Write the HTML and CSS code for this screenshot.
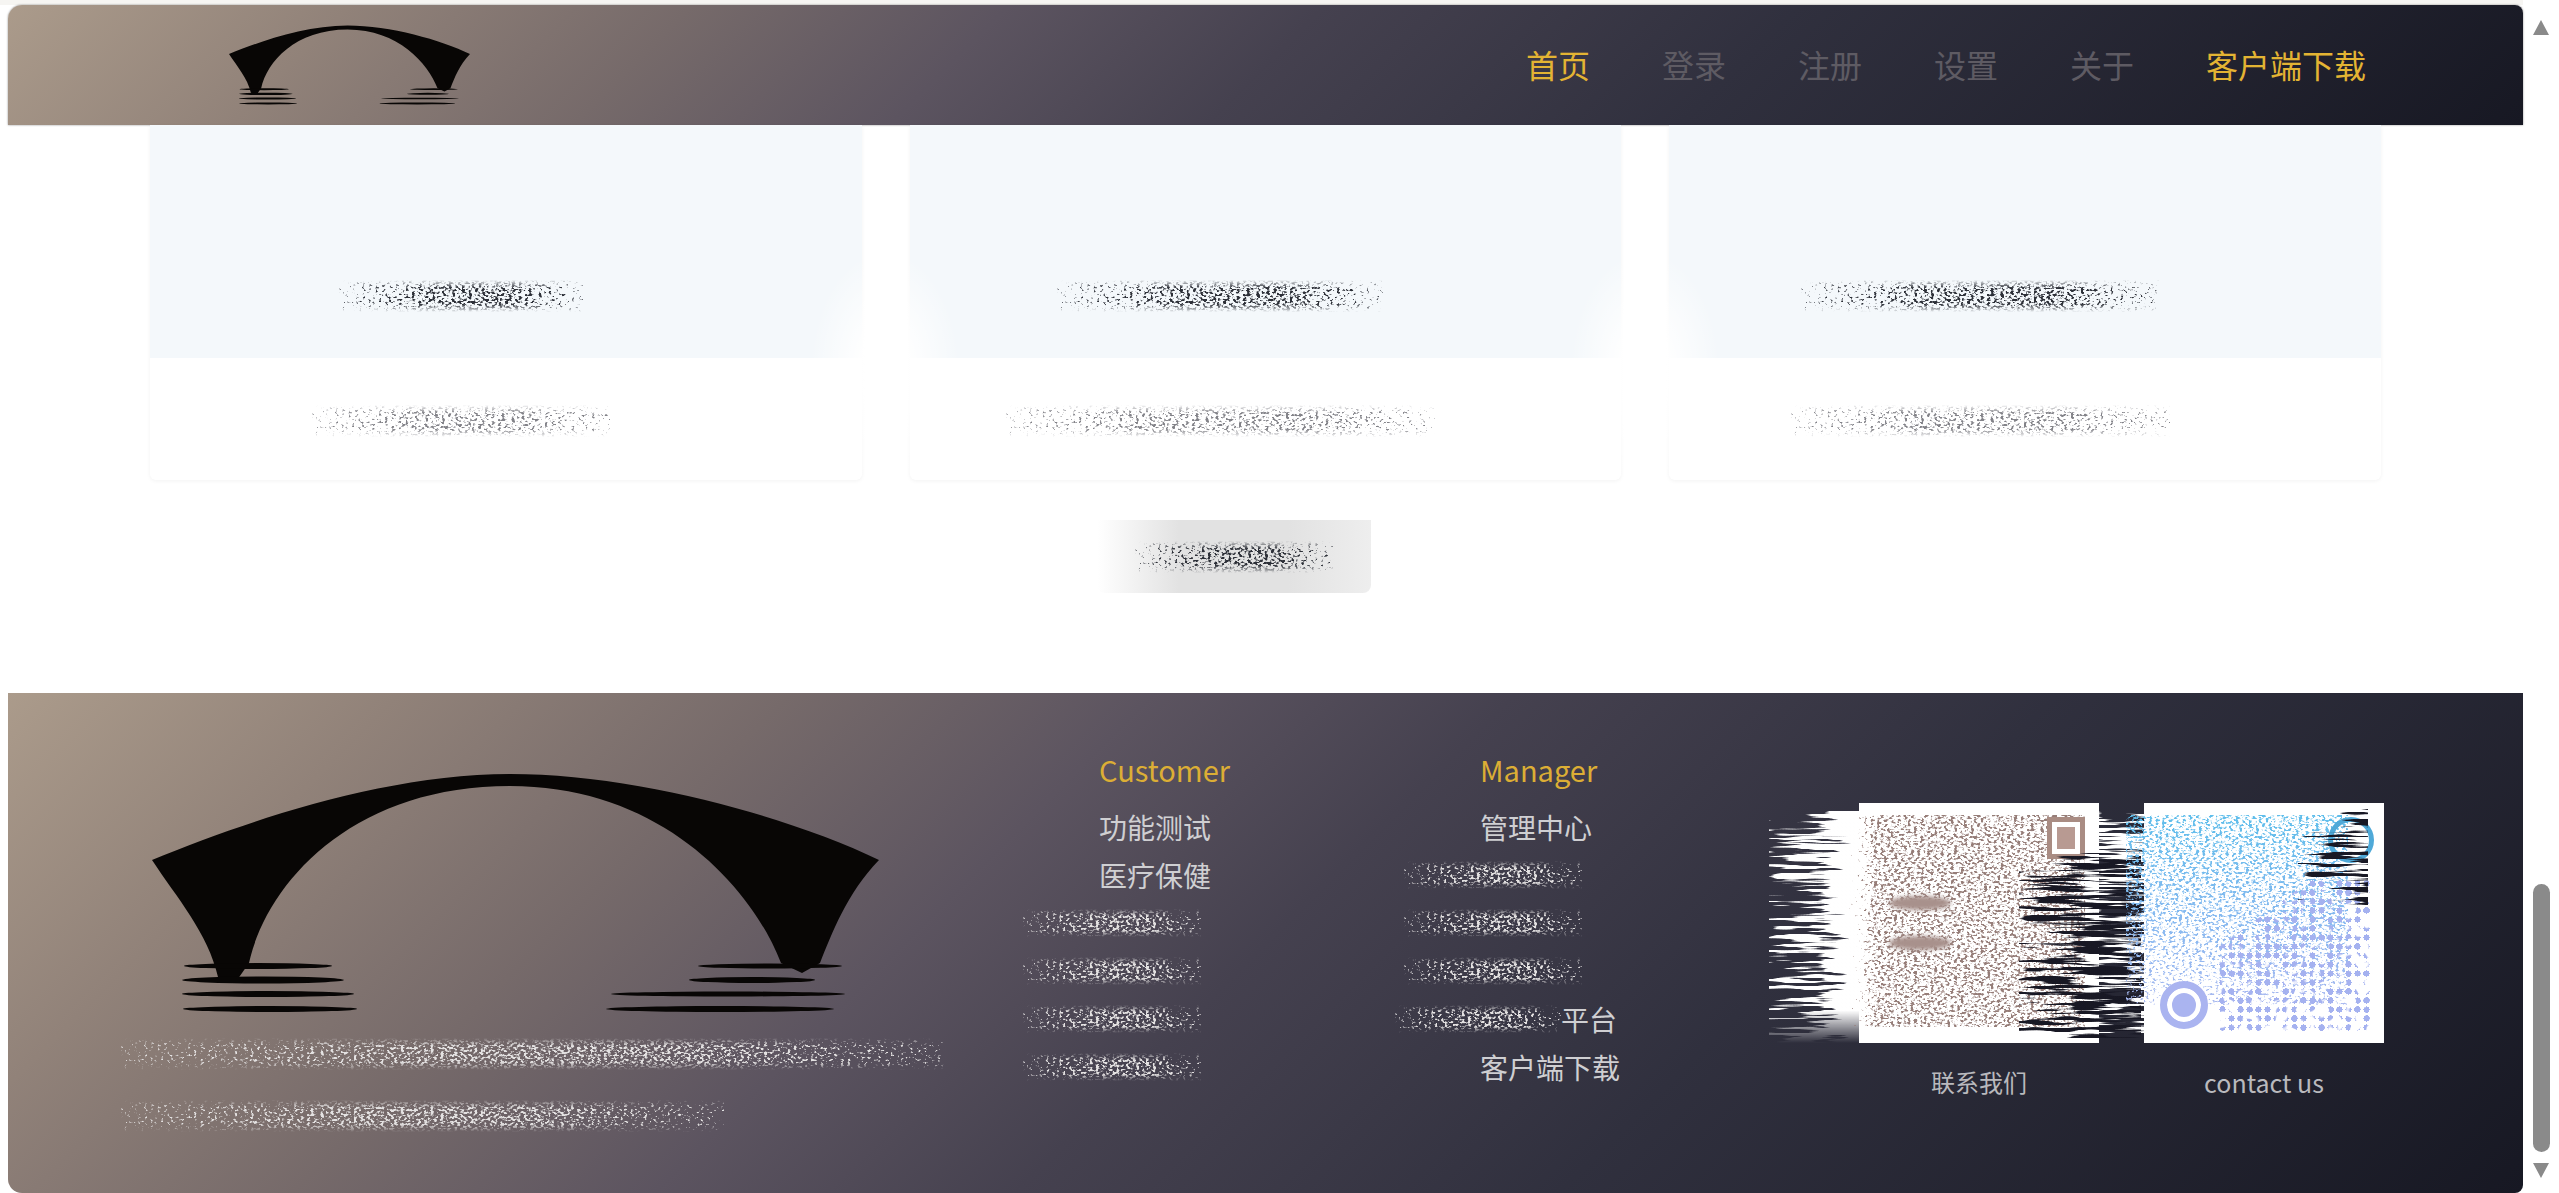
FILE: index.html
```html
<!DOCTYPE html>
<html lang="zh-CN">
	<head>
		<meta charset="UTF-8" />
		<meta name="viewport" content="width=device-width, initial-scale=1.0" />
		<title>首页</title>
		<link rel="stylesheet" href="styles.css">
	</head>
	<body>

		<!-- shared logo and the noise filters for the unreadable areas -->
		<svg class="defs" width="0" height="0" aria-hidden="true">
			<symbol id="bridge" viewBox="0 0 727 240">
				<path d="M0 87 C90 50 230 1 358 1 C486 1 640 45 727 87 C695 120 680 160 668 190 L650 200 L629 190 C600 115 510 13 358 13 C200 13 115 110 97 190 L83 210 L66 204 C56 160 25 125 0 87 Z" />
				<ellipse cx="106" cy="193" rx="74" ry="3" />
				<ellipse cx="111" cy="207" rx="81" ry="3.5" />
				<ellipse cx="116" cy="221" rx="86" ry="3" />
				<ellipse cx="118" cy="236" rx="87" ry="3" />
				<ellipse cx="618" cy="193" rx="72" ry="2.5" />
				<ellipse cx="600" cy="207" rx="63" ry="3" />
				<ellipse cx="576" cy="221" rx="117" ry="2.5" />
				<ellipse cx="568" cy="236" rx="114" ry="3" />
			</symbol>
			<filter id="speckle" x="0" y="0" width="100%" height="100%" color-interpolation-filters="sRGB">
				<feTurbulence type="fractalNoise" baseFrequency=".3 .42" numOctaves="2" seed="4" />
				<feColorMatrix values="0 0 0 0 0 0 0 0 0 0 0 0 0 0 0 0 0 0 1 0" result="noise" />
				<feComposite in="noise" in2="SourceAlpha" operator="arithmetic" k2="1" k3="1" k4="-1" />
				<feColorMatrix values="0 0 0 0 0 0 0 0 0 0 0 0 0 0 0 0 0 0 7 0" result="holes" />
				<feColorMatrix in="SourceGraphic" values="1 0 0 0 0 0 1 0 0 0 0 0 1 0 0 0 0 0 0 1" />
				<feComposite in2="holes" operator="in" />
			</filter>
			<filter id="streak" x="0" y="0" width="100%" height="100%" color-interpolation-filters="sRGB">
				<feTurbulence type="fractalNoise" baseFrequency=".018 .28" numOctaves="2" seed="9" />
				<feColorMatrix values="0 0 0 0 0 0 0 0 0 0 0 0 0 0 0 0 0 0 1 0" result="noise" />
				<feComposite in="noise" in2="SourceAlpha" operator="arithmetic" k2="1" k3="1" k4="-1" />
				<feColorMatrix values="0 0 0 0 0 0 0 0 0 0 0 0 0 0 0 0 0 0 14 0" result="holes" />
				<feColorMatrix in="SourceGraphic" values="1 0 0 0 0 0 1 0 0 0 0 0 1 0 0 0 0 0 0 1" />
				<feComposite in2="holes" operator="in" />
			</filter>
			<filter id="patchy" x="0" y="0" width="100%" height="100%" color-interpolation-filters="sRGB">
				<feTurbulence type="fractalNoise" baseFrequency=".11" numOctaves="1" seed="3" />
				<feColorMatrix values="0 0 0 0 0 0 0 0 0 0 0 0 0 0 0 0 0 0 1 0" result="noise" />
				<feComposite in="noise" in2="SourceAlpha" operator="arithmetic" k2="1" k3="1" k4="-1" />
				<feColorMatrix values="0 0 0 0 0 0 0 0 0 0 0 0 0 0 0 0 0 0 14 0" result="holes" />
				<feColorMatrix in="SourceGraphic" values="1 0 0 0 0 0 1 0 0 0 0 0 1 0 0 0 0 0 0 1" />
				<feComposite in2="holes" operator="in" />
			</filter>
		</svg>

		<div class="page">
			<header class="topbar">
				<svg class="logo-small" aria-hidden="true"><use href="#bridge" /></svg>
				<nav class="nav">
					<a class="nav-link gold">首页</a>
					<a class="nav-link">登录</a>
					<a class="nav-link">注册</a>
					<a class="nav-link">设置</a>
					<a class="nav-link">关于</a>
					<a class="nav-link gold">客户端下载</a>
				</nav>
			</header>

			<main class="content">
				<div class="cards">
					<article class="card">
						<div class="card-top"><span class="smudge dark shifted w-244"></span></div>
						<div class="card-bottom"><span class="smudge grey shifted w-298"></span></div>
					</article>
					<article class="card">
						<div class="card-top"><span class="smudge dark shifted w-326"></span></div>
						<div class="card-bottom"><span class="smudge grey shifted w-429"></span></div>
					</article>
					<article class="card">
						<div class="card-top"><span class="smudge dark shifted w-359"></span></div>
						<div class="card-bottom"><span class="smudge grey shifted w-379"></span></div>
					</article>
					<div class="seam first"></div>
					<div class="seam second"></div>
				</div>
				<div class="more-row">
					<div class="more-btn"><span class="smudge dark w-198"></span></div>
				</div>
			</main>

			<footer class="footer">
				<div class="brand">
					<svg class="logo-large" aria-hidden="true"><use href="#bridge" /></svg>
					<span class="smudge light line-long"></span>
					<span class="smudge light line-short"></span>
				</div>

				<div class="links">
					<h3 class="links-title">Customer</h3>
					<a class="link">功能测试</a>
					<a class="link">医疗保健</a>
					<span class="smudge light row-smudge"></span>
					<span class="smudge light row-smudge"></span>
					<span class="smudge light row-smudge"></span>
					<span class="smudge light row-smudge"></span>
				</div>

				<div class="links">
					<h3 class="links-title">Manager</h3>
					<a class="link">管理中心</a>
					<span class="smudge light row-smudge"></span>
					<span class="smudge light row-smudge"></span>
					<span class="smudge light row-smudge"></span>
					<div class="link-mixed">
						<span class="smudge light mixed-smudge"></span>
						<a class="link">平台</a>
					</div>
					<a class="link">客户端下载</a>
				</div>

				<div class="codes">
					<figure class="code">
						<div class="qr">
							<div class="qr-smear-left"></div>
							<div class="qr-noise brown"></div>
							<div class="qr-blob first"></div>
							<div class="qr-blob second"></div>
							<div class="qr-finder"></div>
							<div class="qr-smear-gap"></div>
							<div class="qr-smear-dark"></div>
						</div>
						<figcaption class="code-label">联系我们</figcaption>
					</figure>
					<figure class="code">
						<div class="qr">
							<div class="qr-noise blue"></div>
							<div class="qr-dots"></div>
							<div class="qr-target"></div>
							<div class="qr-arc"></div>
							<div class="qr-smear-corner"></div>
						</div>
						<figcaption class="code-label">contact us</figcaption>
					</figure>
				</div>
			</footer>
		</div>

		<div class="scrollbar" aria-hidden="true">
			<div class="arrow-up"></div>
			<div class="thumb"></div>
			<div class="arrow-down"></div>
		</div>

	</body>
</html>
```

FILE: styles.css
```css
* {
	box-sizing: border-box;
	margin: 0;
	padding: 0;
}

html,
body {
	height: 100%;
	overflow: hidden;
}

body {
	background: #fff;
	display: flex;
	font-family: "Noto Sans CJK SC", "Open Sans", sans-serif;
}

.defs {
	position: absolute;
}

.page {
	width: 2523px;
	padding: 5px 0 0 8px;
	background: linear-gradient(to bottom, #f6f5f2 5px, #fff 5px);
}

/* top bar */
.topbar,
.footer {
	background: linear-gradient(135deg, #ab9b8b 0%, #918279 13%, #766a6a 26%, #5c5460 38%, #45414f 50%, #30303e 68%, #171823 100%);
}

.topbar {
	height: 120px;
	display: flex;
	align-items: center;
	justify-content: space-between;
	padding: 0 157px 0 221px;
	border-top-left-radius: 14px;
	border-top-right-radius: 8px;
	box-shadow: 0 0 2px rgba(0, 0, 0, 0.5);
	position: relative;
}

.logo-small {
	width: 241px;
	height: 80px;
	fill: #080605;
	filter: blur(0.5px);
}

.nav {
	display: flex;
	gap: 72px;
	margin-bottom: 2px;
}

.nav-link {
	font-size: 32px;
	line-height: 48px;
	color: #5e5b63;
}

.nav-link.gold {
	color: #e3b433;
}

/* cards */
.content {
	height: 568px;
	padding: 0 142px;
}

.cards {
	display: grid;
	grid-template-columns: repeat(3, 1fr);
	gap: 48px;
	position: relative;
}

.card {
	height: 355px;
	display: flex;
	flex-direction: column;
	background: #fff;
	border-radius: 0 0 6px 6px;
	box-shadow: 0 1px 4px rgba(0, 0, 0, 0.05);
}

.card-top {
	height: 233px;
	padding-top: 155px;
	background: #f4f8fb;
	text-align: center;
}

.card-bottom {
	flex: 1;
	padding-top: 47px;
	text-align: center;
}

/* the card edges wash out here */
.seam {
	position: absolute;
	top: 125px;
	width: 150px;
	height: 240px;
	background: radial-gradient(closest-side, rgba(255, 255, 255, 0.9) 35%, rgba(255, 255, 255, 0));
}

.seam.first {
	left: 660px;
}

.seam.second {
	left: 1420px;
}

.more-row {
	display: flex;
	justify-content: center;
	padding-right: 64px;
	margin-top: 40px;
}

.more-btn {
	width: 274px;
	height: 73px;
	display: flex;
	align-items: center;
	justify-content: center;
	background: linear-gradient(to right, #fff 0%, #e2e2e2 30%, #e2e2e2 70%, #eee 100%);
	border-radius: 0 0 8px 8px;
}

/* stand-ins for the areas where the text can't be read */
.smudge {
	display: inline-block;
	height: 32px;
	filter: url(#speckle);
	-webkit-mask-image: linear-gradient(to bottom, transparent, #000 25%, #000 75%, transparent);
	mask-image: linear-gradient(to bottom, transparent, #000 25%, #000 75%, transparent);
}

.smudge.shifted {
	margin-right: 90px;
}

.smudge.dark {
	background: linear-gradient(to right, rgba(45, 48, 56, 0.33), rgba(45, 48, 56, 0.5) 35%, rgba(45, 48, 56, 0.53) 70%, rgba(45, 48, 56, 0.33));
}

.smudge.grey {
	background: linear-gradient(to right, rgba(130, 130, 136, 0.34), rgba(130, 130, 136, 0.48) 35%, rgba(130, 130, 136, 0.48) 70%, rgba(130, 130, 136, 0.34));
}

.smudge.light {
	background: linear-gradient(to right, rgba(228, 226, 226, 0.36), rgba(228, 226, 226, 0.52) 40%, rgba(228, 226, 226, 0.52) 70%, rgba(228, 226, 226, 0.36));
}

.w-198 { width: 198px; }
.w-244 { width: 244px; }
.w-298 { width: 298px; }
.w-326 { width: 326px; }
.w-359 { width: 359px; }
.w-379 { width: 379px; }
.w-429 { width: 429px; }

/* footer */
.footer {
	height: 500px;
	display: grid;
	grid-template-columns: 978px 381px 379px auto;
	padding-left: 113px;
	border-bottom-left-radius: 14px;
	border-bottom-right-radius: 8px;
}

.brand {
	display: flex;
	flex-direction: column;
	align-items: flex-start;
	padding-top: 80px;
}

.logo-large {
	width: 727px;
	height: 240px;
	margin-left: 31px;
	fill: #080605;
	filter: blur(0.6px);
}

.line-long {
	width: 823px;
	margin-top: 25px;
}

.line-short {
	width: 603px;
	margin-top: 30px;
}

.links {
	display: flex;
	flex-direction: column;
	align-items: flex-start;
	padding-top: 52px;
}

.links-title {
	font-size: 29px;
	font-weight: 400;
	line-height: 48px;
	margin-bottom: 10px;
	color: #dcae35;
}

.link {
	font-size: 28px;
	line-height: 48px;
	color: #cfcfd2;
}

.row-smudge {
	width: 178px;
	height: 28px;
	margin: 10px 0 10px -76px;
}

.link-mixed {
	display: flex;
	align-items: center;
	margin-left: -85px;
}

.mixed-smudge {
	width: 166px;
	height: 28px;
}

.codes {
	display: flex;
	gap: 45px;
	padding-top: 110px;
}

.code-label {
	font-size: 24px;
	line-height: 36px;
	margin-top: 21px;
	text-align: center;
	color: #b9b9bd;
}

.code:last-child .code-label {
	font-size: 25px;
}

.qr {
	width: 240px;
	height: 240px;
	background: #fff;
	position: relative;
}

/* everything in a code sits on top of the white square */
.qr-noise {
	position: absolute;
	top: 12px;
	filter: url(#speckle);
}

.qr-noise.brown {
	left: -18px;
	width: 244px;
	height: 212px;
	background: linear-gradient(to right, rgba(150, 125, 120, 0.1), rgba(150, 125, 120, 0.5) 14%);
}

.qr-noise.blue {
	left: -18px;
	width: 222px;
	height: 190px;
	background: linear-gradient(to bottom, rgba(95, 190, 235, 0.5), rgba(135, 185, 240, 0.5) 55%, rgba(170, 185, 240, 0.42));
}

.qr-blob {
	position: absolute;
	left: 30px;
	width: 62px;
	height: 14px;
	border-radius: 50%;
	background: #a8918c;
	filter: blur(2px);
}

.qr-blob.first {
	top: 93px;
}

.qr-blob.second {
	top: 133px;
}

.qr-finder {
	position: absolute;
	top: 14px;
	right: 14px;
	width: 38px;
	height: 42px;
	border: 5px solid #a98c83;
	box-shadow: inset 0 0 0 5px #fff, inset 0 0 0 14px #b89a92;
}

.qr-smear-left {
	position: absolute;
	top: 8px;
	left: -90px;
	width: 120px;
	height: 232px;
	background: linear-gradient(to right, rgba(255, 255, 255, 0.42), rgba(255, 255, 255, 0.56) 45%, rgba(255, 255, 255, 0.95) 75%);
	filter: url(#streak);
	-webkit-mask-image: linear-gradient(to bottom, #000 86%, transparent);
	mask-image: linear-gradient(to bottom, #000 86%, transparent);
}

.qr-smear-gap {
	position: absolute;
	top: 8px;
	left: 240px;
	width: 45px;
	height: 222px;
	background: rgba(255, 255, 255, 0.56);
	filter: url(#streak);
}

.qr-smear-dark {
	position: absolute;
	top: 50px;
	left: 160px;
	width: 122px;
	height: 185px;
	background: linear-gradient(to right, rgba(24, 24, 36, 0.42), rgba(24, 24, 36, 0.56) 50%, rgba(24, 24, 36, 0.5));
	filter: url(#streak);
}

.qr-dots {
	position: absolute;
	left: 74px;
	top: 76px;
	width: 152px;
	height: 152px;
	background: radial-gradient(circle, rgba(165, 178, 240, 0.58) 3px, transparent 3.5px) 0 0 / 9px 9px;
	clip-path: polygon(62% 0, 100% 0, 100% 100%, 0 100%, 0 45%);
	filter: url(#patchy);
}

.qr-target {
	position: absolute;
	left: 16px;
	top: 178px;
	width: 48px;
	height: 48px;
	border-radius: 50%;
	border: 7px solid #aab4f0;
	box-shadow: inset 0 0 0 5px #fff;
	background: #aab4f0;
}

.qr-arc {
	position: absolute;
	top: 14px;
	right: 10px;
	width: 46px;
	height: 46px;
	border-radius: 50%;
	border: 5px solid #4fa9d8;
}

.qr-smear-corner {
	position: absolute;
	top: 6px;
	right: 16px;
	width: 70px;
	height: 96px;
	background: linear-gradient(to right, rgba(24, 24, 36, 0.34), rgba(24, 24, 36, 0.55));
	filter: url(#streak);
}

/* scrollbar, drawn since the page itself does not scroll */
.scrollbar {
	width: 36px;
	display: flex;
	flex-direction: column;
	align-items: center;
	padding: 20px 0 15px;
	background: #fff;
}

.arrow-up,
.arrow-down {
	width: 0;
	height: 0;
	border-left: 8px solid transparent;
	border-right: 8px solid transparent;
}

.arrow-up {
	border-bottom: 15px solid #8a8a8a;
}

.arrow-down {
	border-top: 15px solid #8a8a8a;
}

.thumb {
	width: 17px;
	height: 268px;
	margin-top: auto;
	margin-bottom: 11px;
	border-radius: 9px;
	background: #8a8a8a;
}
```
